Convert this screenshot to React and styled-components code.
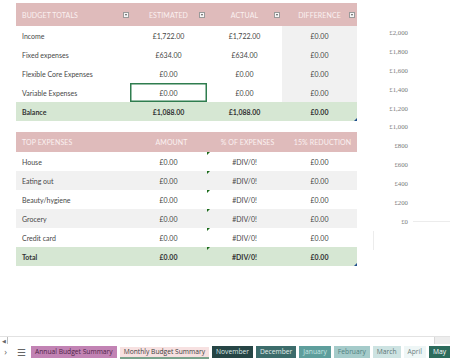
import React from 'react';
import styled, { createGlobalStyle } from 'styled-components';

const GlobalStyle = createGlobalStyle`
  html, body {
    margin: 0;
    padding: 0;
    background: #fff;
  }
  * {
    box-sizing: border-box;
  }
`;

const tones = {
  white: '#ffffff',
  gray: '#f1f1f1',
  green: '#d6e7d3',
};

const Page = styled.div`
  width: 450px;
  height: 359px;
  display: flex;
  flex-direction: column;
  overflow: hidden;
  background: #fff;
  font-family: 'Lato', 'Open Sans', sans-serif;
`;

const Sheet = styled.div`
  height: 336px;
  display: flex;
`;

const Tables = styled.div`
  width: 357px;
  padding: 3px 0 0 16px;
  display: flex;
  flex-direction: column;
  gap: 11px;
`;

const Grid = styled.div`
  display: grid;
  grid-template-columns: 114px 77px 75px 75px;
  position: relative;
  &::after {
    content: '';
    position: absolute;
    right: 0;
    bottom: 0;
    border-bottom: 3px solid #1f4e8c;
    border-left: 3px solid transparent;
  }
`;

const HeadCell = styled.div`
  height: ${({ $h }) => $h}px;
  background: #dfbbbb;
  color: #fbf1f1;
  font-size: 7px;
  letter-spacing: 0.1px;
  display: flex;
  align-items: center;
  padding: ${({ $left }) => ($left ? '0 1px 0 6px' : '0 2px 0 8px')};
`;

const HeadLabel = styled.span`
  flex: 1;
  text-align: ${({ $left }) => ($left ? 'left' : 'center')};
  white-space: nowrap;
`;

const Dropdown = styled.span`
  width: 6px;
  height: 6px;
  background: #f7f7f7;
  border: 1px solid #9a9a9a;
  display: flex;
  align-items: center;
  justify-content: center;
  &::before {
    content: '';
    border-top: 2px solid #555;
    border-left: 1.5px solid transparent;
    border-right: 1.5px solid transparent;
  }
`;

const Cell = styled.div`
  height: 19px;
  display: flex;
  align-items: center;
  justify-content: ${({ $left }) => ($left ? 'flex-start' : 'center')};
  padding-left: ${({ $left }) => ($left ? '6px' : '0')};
  background: ${({ $tone }) => tones[$tone || 'white']};
  color: ${({ $bold }) => ($bold ? '#333' : '#474747')};
  font-size: 7px;
  font-weight: ${({ $bold }) => ($bold ? 700 : 400)};
  white-space: nowrap;
  position: relative;
  box-shadow: ${({ $selected }) => ($selected ? 'inset 0 0 0 1.5px #2f7d4f' : 'none')};
  &::before {
    content: '';
    display: ${({ $flag }) => ($flag ? 'block' : 'none')};
    position: absolute;
    top: 0;
    left: 0;
    border-top: 3px solid #1b6b1b;
    border-right: 3px solid transparent;
  }
`;

const Chart = styled.div`
  width: 93px;
  padding-top: 23px;
  display: flex;
  flex-direction: column;
`;

const AxisRow = styled.div`
  height: 18.9px;
  display: flex;
  align-items: center;
`;

const AxisLabel = styled.span`
  width: 51px;
  text-align: right;
  font-family: 'Liberation Serif', serif;
  font-size: 6.8px;
  color: #7a7a7a;
`;

const Gridline = styled.span`
  flex: 1;
  height: 1px;
  margin-left: 5px;
  background: #ececec;
`;

const Frame = styled.div`
  margin-left: 16px;
  height: 19px;
  border-left: 1px solid #ececec;
`;

const ScrollRow = styled.div`
  height: 8px;
  display: flex;
  border-top: 1px solid #e2e2e2;
`;

const ScrollButton = styled.span`
  width: 8px;
  border-right: 1px solid #bdbdbd;
  font-size: 5px;
  color: #666;
  display: flex;
  align-items: center;
  justify-content: center;
`;

const ScrollTrack = styled.span`
  flex: 1;
  background: #fff;
  border-right: 1px solid #d8d8d8;
`;

const ScrollEnd = styled.span`
  width: 15px;
  background: #ededed;
`;

const TabBar = styled.div`
  height: 15px;
  display: flex;
  align-items: center;
  gap: 3px;
  background: #fff;
  font-family: 'Open Sans', sans-serif;
`;

const NavIcon = styled.span`
  width: ${({ $w }) => $w}px;
  flex-shrink: 0;
  font-size: ${({ $size }) => $size}px;
  color: #666;
  text-align: center;
`;

const Tab = styled.span`
  height: 12px;
  padding: 0 4px;
  display: flex;
  align-items: center;
  font-size: 6.7px;
  white-space: nowrap;
  background: ${({ $bg }) => $bg};
  color: ${({ $fg }) => $fg};
  border-bottom: ${({ $active }) => ($active ? '2px solid #7aa38c' : 'none')};
  margin-top: ${({ $active }) => ($active ? '2px' : '0')};
  flex-shrink: 0;
`;

const budgetRows = [
  ['Income', '£1,722.00', '£1,722.00', '£0.00'],
  ['Fixed expenses', '£634.00', '£634.00', '£0.00'],
  ['Flexible Core Expenses', '£0.00', '£0.00', '£0.00'],
  ['Variable Expenses', '£0.00', '£0.00', '£0.00'],
];

const expenses = ['House', 'Eating out', 'Beauty/hygiene', 'Grocery', 'Credit card'];

const axis = ['£2,000', '£1,800', '£1,600', '£1,400', '£1,200', '£1,000', '£800', '£600', '£400', '£200', '£0'];

const tabs = [
  { name: 'Annual Budget Summary', bg: '#c283b4', fg: '#4f2347' },
  { name: 'Monthly Budget Summary', bg: '#f7e1e1', fg: '#3d3d3d', active: true },
  { name: 'November', bg: '#264545', fg: '#dcebea' },
  { name: 'December', bg: '#3c6c6b', fg: '#e3efee' },
  { name: 'January', bg: '#5e9e9c', fg: '#c6e6e4' },
  { name: 'February', bg: '#a5cbca', fg: '#4e807f' },
  { name: 'March', bg: '#cde3e2', fg: '#5a7473' },
  { name: 'April', bg: '#eef6f6', fg: '#6b7f7f' },
  { name: 'May', bg: '#2c6b5c', fg: '#ffffff' },
];

const App = () => (
  <Page>
    <GlobalStyle />
    <Sheet>
      <Tables>
        <Grid>
          {['Budget Totals', 'Estimated', 'Actual', 'Difference'].map((h, i) => (
            <HeadCell key={h} $h={23} $left={i === 0}>
              <HeadLabel $left={i === 0}>{h.toUpperCase()}</HeadLabel>
              <Dropdown />
            </HeadCell>
          ))}
          {budgetRows.map((row, r) =>
            row.map((v, c) => (
              <Cell
                key={`${r}-${c}`}
                $left={c === 0}
                $tone={c === 3 ? 'gray' : 'white'}
                $selected={r === 3 && c === 1}
              >
                {v}
              </Cell>
            ))
          )}
          {['Balance', '£1,088.00', '£1,088.00', '£0.00'].map((v, c) => (
            <Cell key={`b-${c}`} $left={c === 0} $tone="green" $bold>
              {v}
            </Cell>
          ))}
        </Grid>

        <Grid>
          {['Top Expenses', 'Amount', '% of Expenses', '15% Reduction'].map((h, i) => (
            <HeadCell key={h} $h={20} $left={i === 0}>
              <HeadLabel $left={i === 0}>{h.toUpperCase()}</HeadLabel>
            </HeadCell>
          ))}
          {expenses.map((name, r) => {
            const tone = r % 2 ? 'gray' : 'white';
            return (
              <React.Fragment key={name}>
                <Cell $left $tone={tone}>{name}</Cell>
                <Cell $tone={tone}>£0.00</Cell>
                <Cell $tone={tone} $flag>#DIV/0!</Cell>
                <Cell $tone={tone}>£0.00</Cell>
              </React.Fragment>
            );
          })}
          <Cell $left $tone="green" $bold>Total</Cell>
          <Cell $tone="green" $bold>£0.00</Cell>
          <Cell $tone="green" $bold $flag>#DIV/0!</Cell>
          <Cell $tone="green" $bold>£0.00</Cell>
        </Grid>
      </Tables>

      <Chart>
        {axis.map((a, i) => (
          <AxisRow key={a}>
            <AxisLabel>{a}</AxisLabel>
            {i === axis.length - 1 && <Gridline />}
          </AxisRow>
        ))}
        <Frame />
      </Chart>
    </Sheet>

    <ScrollRow>
      <ScrollButton>◀</ScrollButton>
      <ScrollTrack />
      <ScrollEnd />
    </ScrollRow>

    <TabBar>
      <NavIcon $w={11} $size={9}>›</NavIcon>
      <NavIcon $w={14} $size={10}>☰</NavIcon>
      {tabs.map((t) => (
        <Tab key={t.name} $bg={t.bg} $fg={t.fg} $active={t.active}>
          {t.name}
        </Tab>
      ))}
    </TabBar>
  </Page>
);

export default App;
